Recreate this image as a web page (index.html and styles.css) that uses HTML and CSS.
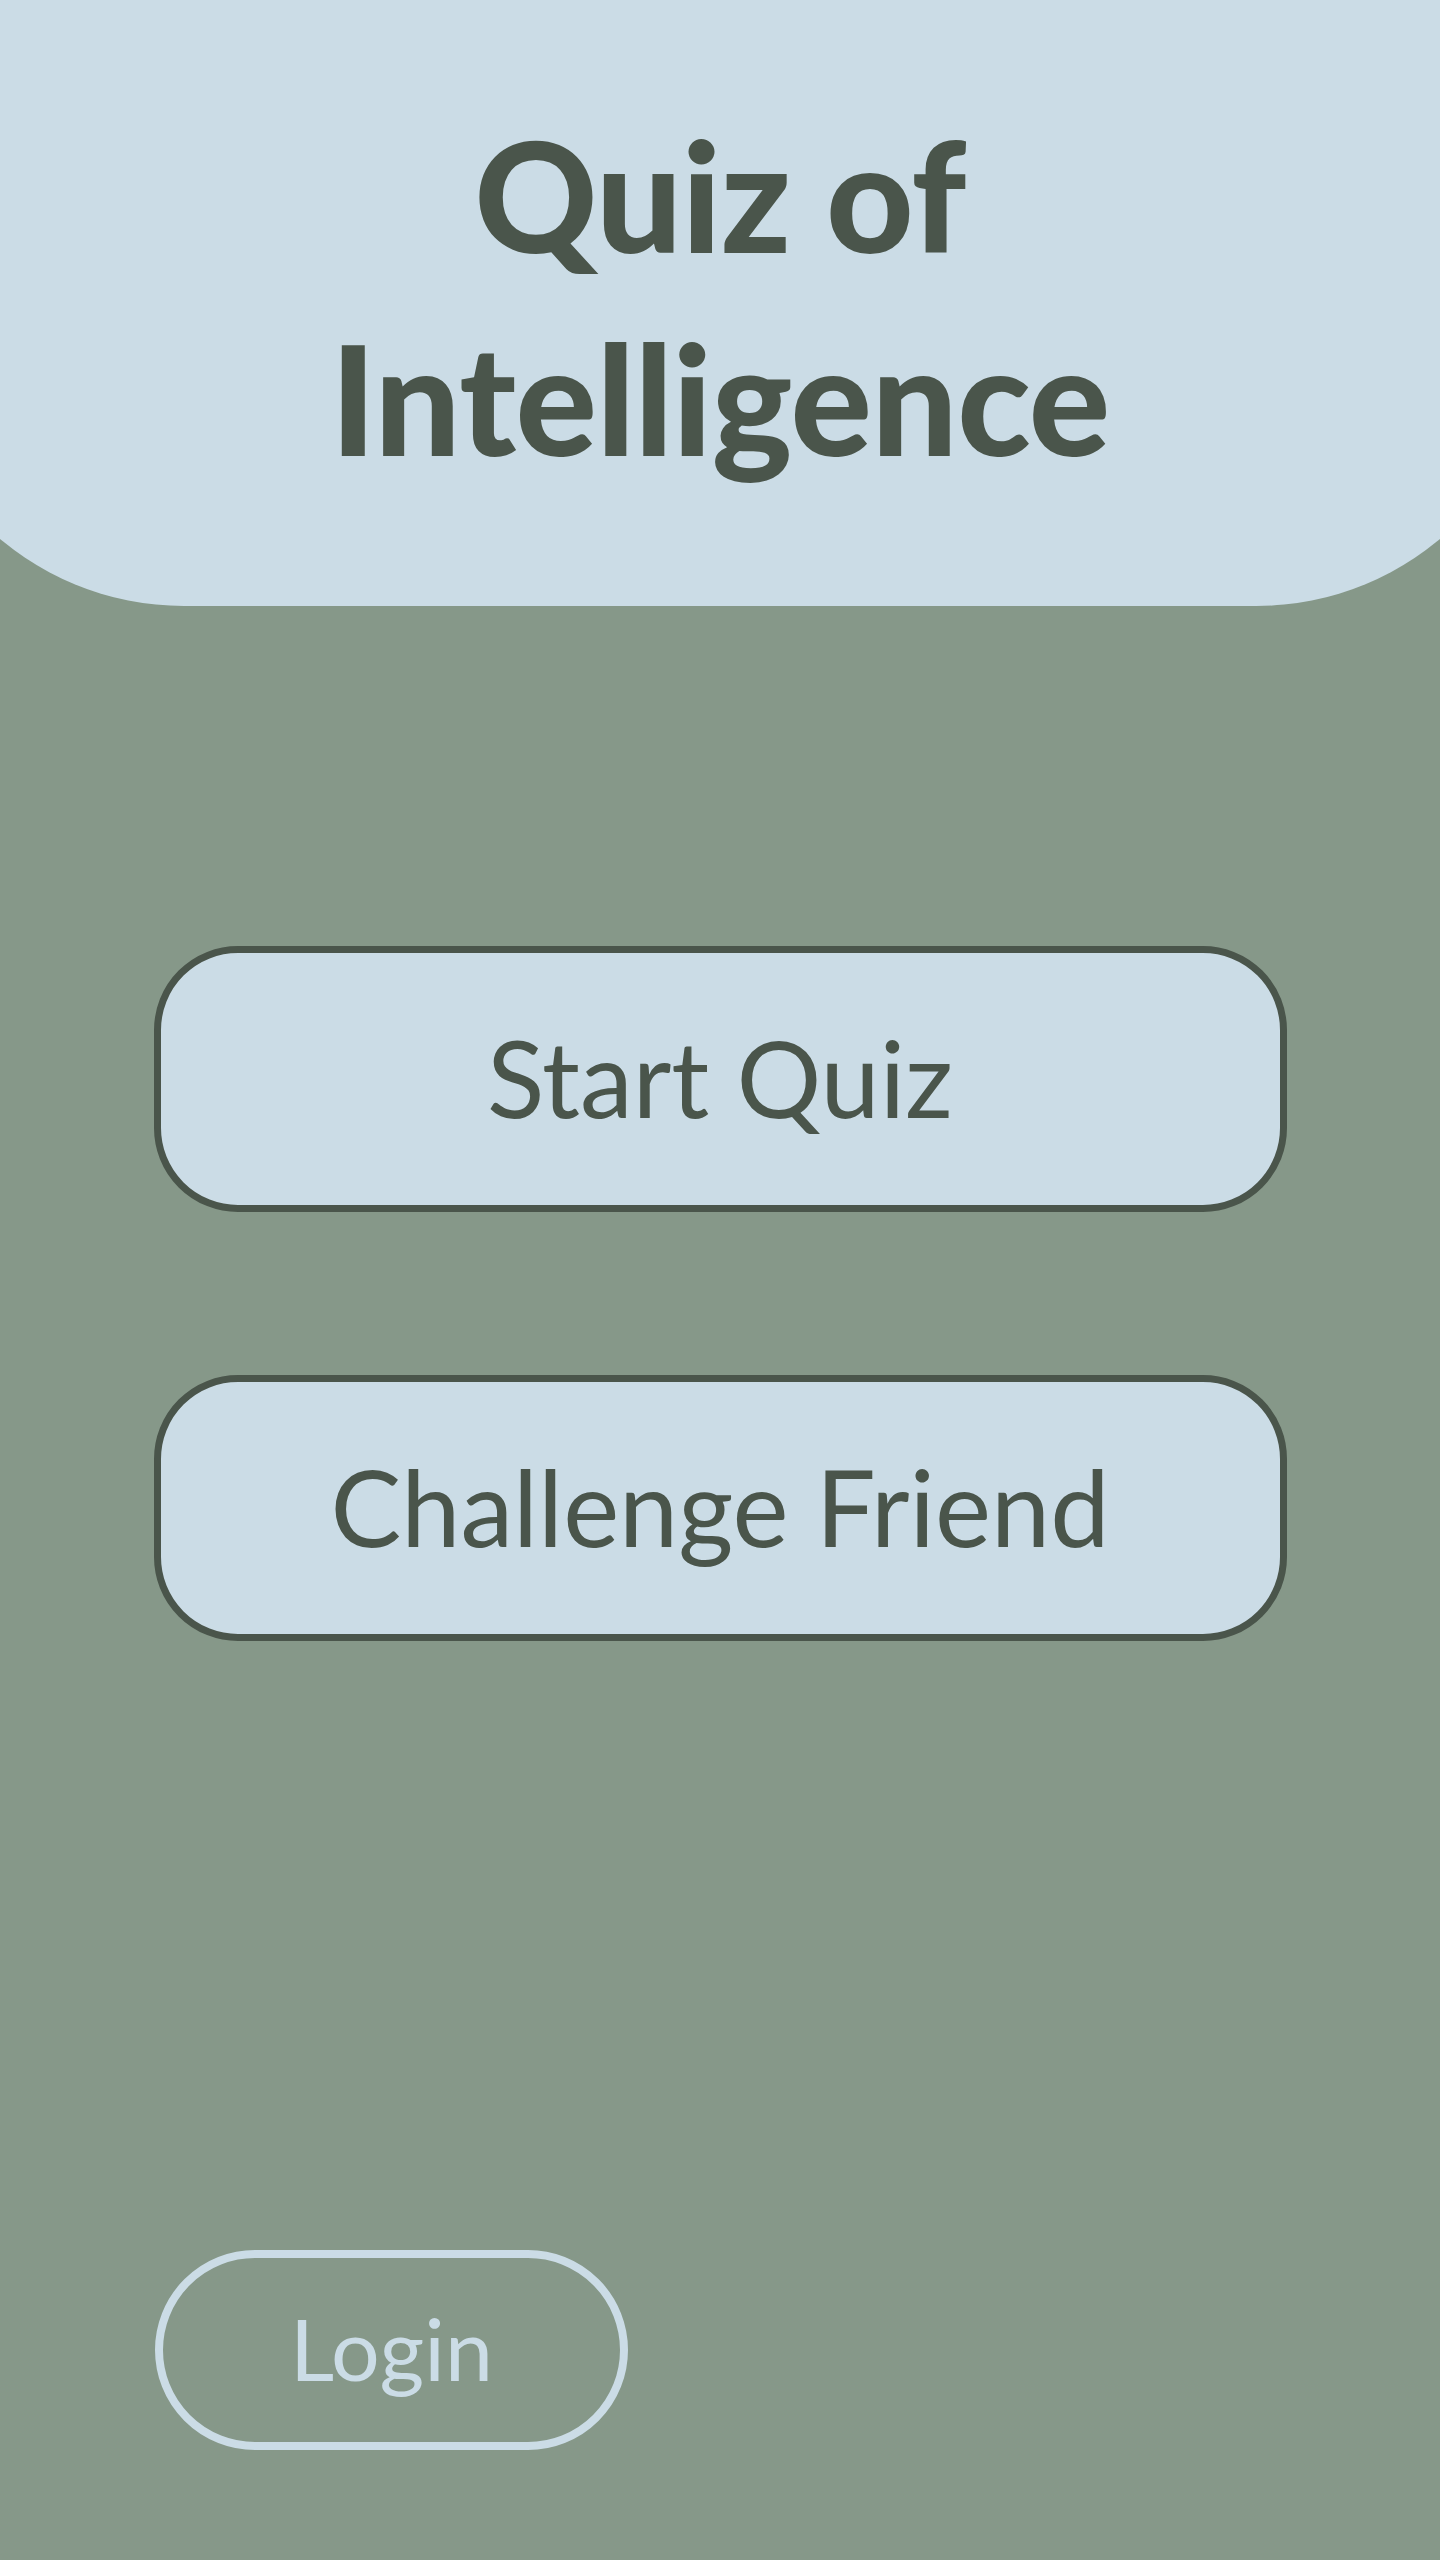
FILE: index.html
```html
<!DOCTYPE html>
<html lang="en">
<head>
<meta charset="utf-8">
<title>Quiz of Intelligence</title>
<link rel="stylesheet" href="styles.css">
</head>
<body>
<div class="page">
  <header class="hero">
    <h1 class="title">Quiz of<br>Intelligence</h1>
  </header>
  <main class="menu">
    <button class="menu-btn">Start Quiz</button>
    <button class="menu-btn">Challenge Friend</button>
  </main>
  <footer class="foot">
    <button class="login-btn">Login</button>
  </footer>
</div>
</body>
</html>
```

FILE: styles.css
```css
* { box-sizing: border-box; }
html, body {
  margin: 0;
  padding: 0;
  background: #869889;
  overflow-x: hidden;
}
.page {
  min-height: 2560px;
  display: flex;
  flex-direction: column;
  overflow: hidden;
  font-family: Lato, "Open Sans", sans-serif;
}
.hero {
  height: 606px;
  margin: 0 -102px;
  background: #cbdce6;
  border-radius: 0 0 286px 286px;
  display: flex;
  justify-content: center;
  align-items: flex-start;
  padding-top: 93px;
}
.title {
  margin: 0;
  text-align: center;
  color: #4a554b;
  font-weight: 900;
  font-size: 152px;
  line-height: 203px;
  letter-spacing: -0.5px;
}
.menu {
  display: flex;
  flex-direction: column;
  align-items: center;
  gap: 163px;
  padding-top: 340px;
}
.menu-btn {
  width: 1133px;
  height: 266px;
  border: 7px solid #4a554b;
  border-radius: 84px;
  background: #cbdce6;
  color: #4a554b;
  font-family: Lato, "Open Sans", sans-serif;
  font-size: 106px;
  font-weight: 400;
  letter-spacing: 0;
  padding: 0 0 4px;
}
.foot {
  margin-top: auto;
  padding: 0 0 110px 155px;
}
.login-btn {
  width: 473px;
  height: 200px;
  border: 8px solid #cbdce6;
  border-radius: 100px;
  background: transparent;
  color: #cbdce6;
  font-family: Lato, "Open Sans", sans-serif;
  font-size: 86px;
  font-weight: 400;
  padding: 0 0 6px;
}
```
